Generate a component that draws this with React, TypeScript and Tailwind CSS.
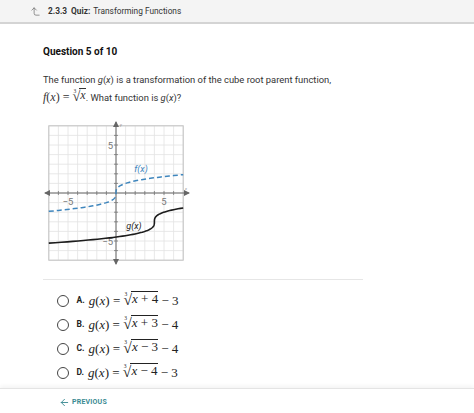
import { CornerLeftUp, ArrowLeft } from "lucide-react";
import type { ReactNode } from "react";

const U = 9.6;
const O = 72;
const px = (x: number) => O + x * U;
const py = (y: number) => O - y * U;

function curve(x0: number, y0: number, tMin: number, tMax: number) {
  const pts: string[] = [];
  const n = 80;
  for (let i = 0; i <= n; i++) {
    const t = tMin + ((tMax - tMin) * i) / n;
    pts.push(`${px(x0 + t * t * t).toFixed(2)},${py(y0 + t).toFixed(2)}`);
  }
  return "M" + pts.join(" L");
}

function Graph() {
  const lines = [];
  for (let i = -7; i <= 7; i++) {
    lines.push(
      <line key={"v" + i} x1={px(i)} y1={py(7)} x2={px(i)} y2={py(-7)} stroke="#e2e2e2" strokeWidth={0.8} />,
      <line key={"h" + i} x1={px(-7)} y1={py(i)} x2={px(7)} y2={py(i)} stroke="#e2e2e2" strokeWidth={0.8} />
    );
  }
  const ticks = [];
  for (let i = -6; i <= 6; i++) {
    if (i === 0) continue;
    ticks.push(
      <line key={"tx" + i} x1={px(i)} y1={O - 2} x2={px(i)} y2={O + 2} stroke="#777" strokeWidth={0.8} />,
      <line key={"ty" + i} x1={O - 2} y1={py(i)} x2={O + 2} y2={py(i)} stroke="#777" strokeWidth={0.8} />
    );
  }
  const cf = Math.cbrt(7);
  return (
    <svg width={146} height={144} viewBox="0 0 146 144" className="block">
      {lines}
      <rect x={px(-7)} y={py(7)} width={14 * U} height={14 * U} fill="none" stroke="#c4c4c4" strokeWidth={1} />
      <line x1={1} y1={O} x2={145} y2={O} stroke="#666" strokeWidth={1} />
      <line x1={O} y1={1} x2={O} y2={143} stroke="#666" strokeWidth={1} />
      <polygon points={`0,${O} 6,${O - 3} 6,${O + 3}`} fill="#666" />
      <polygon points={`146,${O} 140,${O - 3} 140,${O + 3}`} fill="#666" />
      <polygon points={`${O},0 ${O - 3},6 ${O + 3},6`} fill="#666" />
      <polygon points={`${O},144 ${O - 3},138 ${O + 3},138`} fill="#666" />
      {ticks}
      <text x={px(-5)} y={O + 12} fontSize={9.5} fill="#777" textAnchor="middle" fontFamily="Roboto, sans-serif">−5</text>
      <text x={px(5)} y={O + 12} fontSize={9.5} fill="#777" textAnchor="middle" fontFamily="Roboto, sans-serif">5</text>
      <text x={O - 3} y={py(5) + 3.5} fontSize={9.5} fill="#777" textAnchor="end" fontFamily="Roboto, sans-serif">5</text>
      <text x={O - 3} y={py(-5) + 3.5} fontSize={9.5} fill="#777" textAnchor="end" fontFamily="Roboto, sans-serif">−5</text>
      <text x={O + 4} y={5} fontSize={4} fill="#888" fontStyle="italic" fontFamily="Roboto, sans-serif">y</text>
      <text x={141} y={O - 3} fontSize={4} fill="#888" fontStyle="italic" fontFamily="Roboto, sans-serif">x</text>
      <path d={curve(0, 0, -cf, cf)} fill="none" stroke="#3f86bd" strokeWidth={1.5} strokeDasharray="5 3" />
      <path d={curve(4, -3, Math.cbrt(-11), Math.cbrt(3))} fill="none" stroke="#1c1c1c" strokeWidth={1.6} />
      <text x={97} y={51} fontSize={9} fill="#3f86bd" fontStyle="italic" textAnchor="middle" fontFamily="Roboto, sans-serif">f(x)</text>
      <text x={90} y={108} fontSize={9} fill="#1c1c1c" fontStyle="italic" textAnchor="middle" fontFamily="Roboto, sans-serif">g(x)</text>
    </svg>
  );
}

function Cbrt({ children }: { children: ReactNode }) {
  return (
    <span className="inline-flex items-end">
      <span className="relative leading-none">
        <span className="absolute left-[1px] top-[0px] text-[5.5px] leading-none not-italic">3</span>
        <span className="not-italic text-[1.2em] leading-none">√</span>
      </span>
      <span className="border-t border-current leading-[1.1] ml-[-1px] pl-[1px] mb-[1px]">{children}</span>
    </span>
  );
}

const serif = "font-['Liberation_Serif','Times_New_Roman',serif]";

function Option({ letter, a, b }: { letter: string; a: string; b: string }) {
  return (
    <div className="h-[24px] flex items-center">
      <span className="w-[11.5px] h-[11.5px] rounded-full border border-[#444] bg-white shrink-0" />
      <span className="ml-[8px] text-[8.5px] font-bold text-[#222]">{letter}.</span>
      <span className={`ml-[4px] text-[13px] text-[#222] ${serif}`}>
        <i>g</i>(<i>x</i>) = <Cbrt><i>x</i> {a}</Cbrt> − {b}
      </span>
    </div>
  );
}

export default function App() {
  return (
    <div className="w-[474px] h-[413px] bg-white overflow-hidden font-['Roboto','Liberation_Sans',sans-serif] text-[#222]">
      <div className="h-[24px] bg-[#f4f4f4] border-b-2 border-[#d4d4d4] flex items-center pl-[30px] text-[8.3px] text-[#333]">
        <CornerLeftUp size={11} strokeWidth={1.5} className="text-[#666]" />
        <span className="ml-[7px] font-bold">2.3.3</span>
        <span className="ml-[4px] font-bold">Quiz:</span>
        <span className="ml-[3px]">Transforming Functions</span>
      </div>
      <div className="px-[43px]">
        <h2 className="mt-[21px] text-[10px] leading-[14px] font-bold text-[#111]">Question 5 of 10</h2>
        <p className="mt-[13px] text-[9.4px] leading-[16px] text-[#333]">
          The function <i>g</i>(<i>x</i>) is a transformation of the cube root parent function,
          <br />
          <span className={`text-[12px] ${serif}`}>
            <i>f</i>(<i>x</i>) = <Cbrt><i>x</i></Cbrt>
          </span>
          . What function is <i>g</i>(<i>x</i>)?
        </p>
        <div className="mt-[15px] ml-[1px]">
          <Graph />
        </div>
        <div className="mt-[14px] w-[320px] border-t border-[#e6e6e6]" />
        <div className="mt-[9px] pl-[14px]">
          <Option letter="A" a="+ 4" b="3" />
          <Option letter="B" a="+ 3" b="4" />
          <Option letter="C" a="− 3" b="4" />
          <Option letter="D" a="− 4" b="3" />
        </div>
      </div>
      <div className="mt-[3px] border-t border-[#e4e4e4] shadow-[0_-2px_4px_rgba(0,0,0,0.05)] h-[40px] flex items-start pt-[8px] pl-[59px]">
        <div className="flex items-center text-[#3a8a92]">
          <ArrowLeft size={11} strokeWidth={2} />
          <span className="ml-[2px] text-[7px] font-bold tracking-[0.2px]">PREVIOUS</span>
        </div>
      </div>
    </div>
  );
}
